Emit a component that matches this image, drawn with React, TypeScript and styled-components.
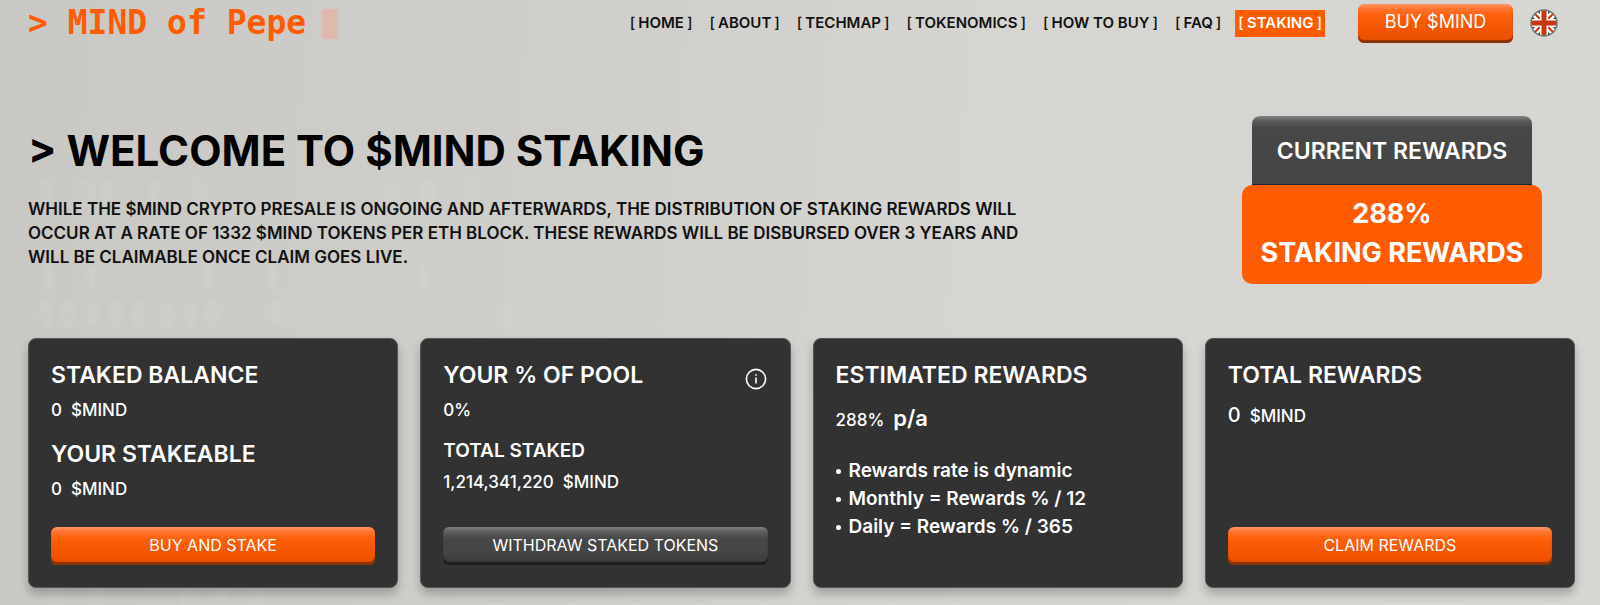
import React from "react";
import styled, { createGlobalStyle, css } from "styled-components";

const GlobalStyle = createGlobalStyle`
  *, *::before, *::after { box-sizing: border-box; }
  html { min-height: 100%; background: #d3d2ce; }
  body {
    margin: 0;
    font-family: Inter, "Liberation Sans", sans-serif;
    color: #111;
  }
  h1, h2, h3, p, ul { margin: 0; padding: 0; }
`;

const Page = styled.div`
  position: relative;
  min-height: 100vh;
  overflow: hidden;
  padding: 0 25px 17px 28px;
  background: linear-gradient(95deg, #c9c8c4 0%, #cfceca 35%, #d6d5d1 62%, #d6d6d2 100%);
`;

const CodeRain = styled.svg`
  position: absolute;
  left: 40px;
  top: 0;
  width: 500px;
  height: 605px;
  filter: blur(2px);
  opacity: 0.3;
`;

const Header = styled.header`
  position: relative;
  display: flex;
  align-items: center;
  height: 46px;
  padding-right: 17px;
`;

const Logo = styled.a`
  display: flex;
  align-items: center;
  gap: 16px;
  margin-right: auto;
  color: #ff5b00;
  font: 700 33px/44px "DejaVu Sans Mono", monospace;
  text-decoration: none;
  white-space: pre;
`;

const Cursor = styled.span`
  width: 16px;
  height: 30px;
  margin-top: 2px;
  background: #dfb9ad;
`;

const Nav = styled.nav`
  display: flex;
  gap: 11px;
  margin-right: 33px;
`;

const NavLink = styled.a<{ $active?: boolean }>`
  display: flex;
  gap: 3px;
  padding: 0 3px 2px;
  font-size: 15px;
  line-height: 25px;
  font-weight: 600;
  white-space: nowrap;
  text-decoration: none;
  color: #111;
  ${(p) => p.$active && css`
    background: #ff5b00;
    color: #fff;
  `}
`;

const Bracket = styled.span`
  font-weight: 500;
`;

const buttonFace = {
  orange: css`
    background: linear-gradient(#ff9465 0, #ff7430 5px, #fd5f09 12px, #f05400 75%, #e84f00 100%);
    box-shadow: inset 0 -3px 1px #8c3207;
  `,
  dark: css`
    background: linear-gradient(#808080 0, #5c5c5c 5px, #474747 12px, #454545 65%, #383838 100%);
    box-shadow: inset 0 -3px 1px #1c1c1c;
  `,
};

const Button = styled.button<{ $tone: "orange" | "dark"; $large?: boolean }>`
  display: block;
  width: ${(p) => (p.$large ? "155px" : "100%")};
  height: ${(p) => (p.$large ? "39px" : "38px")};
  padding: 0 0 3px;
  border: 0;
  border-radius: 6px;
  color: #fff;
  font-family: inherit;
  font-size: ${(p) => (p.$large ? "18px" : "16px")};
  line-height: 24px;
  font-weight: 400;
  white-space: nowrap;
  cursor: pointer;
  ${(p) => buttonFace[p.$tone]}
`;

const Language = styled.button`
  display: flex;
  margin-left: 17px;
  padding: 0;
  border: 0;
  background: none;
  cursor: pointer;
`;

const Hero = styled.section`
  position: relative;
  display: flex;
  align-items: flex-start;
  justify-content: space-between;
  gap: 40px;
  padding: 70px 33px 54px 0;
`;

const Intro = styled.div`
  max-width: 1040px;
  padding-top: 11px;
`;

const Heading = styled.h1`
  font-size: 42px;
  line-height: 48px;
  font-weight: 700;
  color: #000;
`;

const Lead = styled.p`
  margin-top: 22px;
  font-size: 17px;
  line-height: 24px;
  font-weight: 600;
`;

const Line = styled.span`
  display: block;
`;

const Rewards = styled.aside`
  flex: none;
  width: 300px;
  color: #fff;
  text-align: center;
`;

const RewardsTitle = styled.h2`
  margin: 0 10px;
  padding-top: 2px;
  border-radius: 8px 8px 0 0;
  border-bottom: 1px solid #15282c;
  background: linear-gradient(#858585 0, #5c5c5c 5px, #474747 12px, #454545 100%);
  font-size: 23px;
  line-height: 66px;
  font-weight: 600;
`;

const RewardsValue = styled.p`
  height: 99px;
  padding-top: 9px;
  border-radius: 10px;
  background: #ff5b00;
  font-size: 27px;
  line-height: 39px;
  font-weight: 700;
  white-space: nowrap;
`;

const Cards = styled.main`
  position: relative;
  display: grid;
  grid-template-columns: repeat(4, minmax(0, 1fr));
  gap: 22px;
`;

const Card = styled.section`
  display: flex;
  flex-direction: column;
  min-height: 250px;
  padding: 22px 22px 22px;
  border: 1px solid #575555;
  border-radius: 8px;
  background: #323232;
  box-shadow: 0 6px 10px rgba(0, 0, 0, 0.24);
  color: #fff;
`;

const CardHead = styled.div`
  display: flex;
  justify-content: space-between;
`;

const CardTitle = styled.h3<{ $small?: boolean }>`
  font-size: ${(p) => (p.$small ? "19px" : "23px")};
  line-height: 28px;
  font-weight: 600;
  white-space: nowrap;
`;

const Info = styled.button`
  display: flex;
  align-self: flex-end;
  margin: 0 1px -1px 0;
  padding: 0;
  border: 0;
  background: none;
  cursor: pointer;
`;

const Value = styled.p<{ $top: number }>`
  display: flex;
  align-items: baseline;
  gap: 9px;
  margin-top: ${(p) => p.$top}px;
  font-size: 17px;
  line-height: 26px;
  font-weight: 500;
`;

const Group = styled.div<{ $top: number }>`
  margin-top: ${(p) => p.$top}px;
`;

const Unit = styled.span`
  font-size: 22px;
  font-weight: 600;
`;

const Total = styled.span`
  font-size: 20px;
`;

const Actions = styled.div`
  margin-top: auto;
`;

const Notes = styled.ul`
  margin-top: 24px;
  list-style: none;
  font-size: 19px;
  line-height: 28px;
  font-weight: 600;
`;

const Note = styled.li`
  display: flex;
  align-items: center;
  gap: 8px;
  white-space: nowrap;
  &::before {
    content: "";
    width: 5px;
    height: 5px;
    border-radius: 50%;
    background: #fff;
  }
`;

const links = ["HOME", "ABOUT", "TECHMAP", "TOKENOMICS", "HOW TO BUY", "FAQ", "STAKING"];

const rain = [
  [0, 178, 13], [38, 178, 18], [60, 178, 12], [110, 178, 8], [152, 178, 14], [345, 178, 14], [380, 178, 16], [425, 178, 12],
  [0, 300, 12], [22, 300, 14], [48, 300, 10], [70, 300, 12], [92, 300, 12], [120, 300, 14], [145, 300, 10], [166, 300, 12], [232, 298, 8], [464, 302, 7],
  [5, 264, 8], [48, 264, 6], [165, 262, 6], [230, 262, 6], [380, 264, 5],
  [10, 586, 12], [50, 586, 14], [140, 586, 14], [176, 586, 12], [210, 586, 12],
];

const UkFlag = () => (
  <svg width="28" height="28" viewBox="0 0 28 28" aria-hidden="true">
    <clipPath id="flag"><circle cx="14" cy="14" r="13" /></clipPath>
    <g clipPath="url(#flag)">
      <rect width="28" height="28" fill="#163b4b" />
      <path d="M0 0l28 28M28 0L0 28" stroke="#fff" strokeWidth="7" />
      <path d="M0 0l28 28M28 0L0 28" stroke="#c63a0e" strokeWidth="2" />
      <path d="M14 0v28M0 14h28" stroke="#fff" strokeWidth="8" />
      <path d="M14 0v28M0 14h28" stroke="#c63a0e" strokeWidth="5" />
    </g>
    <circle cx="14" cy="14" r="13" fill="none" stroke="#777977" strokeWidth="1.5" />
  </svg>
);

const InfoIcon = () => (
  <svg width="22" height="22" viewBox="0 0 22 22" fill="none" stroke="#fff" aria-hidden="true">
    <circle cx="11" cy="11" r="9.6" strokeWidth="1.6" />
    <path d="M11 9.5v6M11 6.2v1.6" strokeWidth="1.6" />
  </svg>
);

export default function App() {
  return (
    <>
      <GlobalStyle />
      <Page>
        <CodeRain viewBox="0 0 500 605" aria-hidden="true">
          {rain.map(([x, y, w]) => (
            <ellipse key={`${x}-${y}`} cx={x + w / 2} cy={y + 14} rx={w / 3} ry="11" fill="none" stroke="#dcdeda" strokeWidth="3" />
          ))}
        </CodeRain>
        <Header>
          <Logo href="#">{"> MIND of Pepe"}<Cursor /></Logo>
          <Nav>
            {links.map((label) => (
              <NavLink key={label} href="#" $active={label === "STAKING"}>
                <Bracket>[</Bracket><span>{label}</span><Bracket>]</Bracket>
              </NavLink>
            ))}
          </Nav>
          <Button $tone="orange" $large>BUY $MIND</Button>
          <Language aria-label="English"><UkFlag /></Language>
        </Header>

        <Hero>
          <Intro>
            <Heading>&gt; WELCOME TO $MIND STAKING</Heading>
            <Lead>
              <Line>WHILE THE $MIND CRYPTO PRESALE IS ONGOING AND AFTERWARDS, THE DISTRIBUTION OF STAKING REWARDS WILL</Line>
              <Line>OCCUR AT A RATE OF 1332 $MIND TOKENS PER ETH BLOCK. THESE REWARDS WILL BE DISBURSED OVER 3 YEARS AND</Line>
              <Line>WILL BE CLAIMABLE ONCE CLAIM GOES LIVE.</Line>
            </Lead>
          </Intro>
          <Rewards>
            <RewardsTitle>CURRENT REWARDS</RewardsTitle>
            <RewardsValue>288%<br />STAKING REWARDS</RewardsValue>
          </Rewards>
        </Hero>

        <Cards>
          <Card>
            <CardTitle>STAKED BALANCE</CardTitle>
            <Value $top={8}><span>0</span><span>$MIND</span></Value>
            <Group $top={17}>
              <CardTitle>YOUR STAKEABLE</CardTitle>
              <Value $top={8}><span>0</span><span>$MIND</span></Value>
            </Group>
            <Actions><Button $tone="orange">BUY AND STAKE</Button></Actions>
          </Card>
          <Card>
            <CardHead>
              <CardTitle>YOUR % OF POOL</CardTitle>
              <Info aria-label="About your share of the pool"><InfoIcon /></Info>
            </CardHead>
            <Value $top={8}>0%</Value>
            <Group $top={14}>
              <CardTitle $small>TOTAL STAKED</CardTitle>
              <Value $top={4}><span>1,214,341,220</span><span>$MIND</span></Value>
            </Group>
            <Actions><Button $tone="dark">WITHDRAW STAKED TOKENS</Button></Actions>
          </Card>
          <Card>
            <CardTitle>ESTIMATED REWARDS</CardTitle>
            <Value $top={16}><span>288%</span><Unit>p/a</Unit></Value>
            <Notes>
              <Note>Rewards rate is dynamic</Note>
              <Note>Monthly = Rewards % / 12</Note>
              <Note>Daily = Rewards % / 365</Note>
            </Notes>
          </Card>
          <Card>
            <CardTitle>TOTAL REWARDS</CardTitle>
            <Value $top={13}><Total>0</Total><span>$MIND</span></Value>
            <Actions><Button $tone="orange">CLAIM REWARDS</Button></Actions>
          </Card>
        </Cards>
      </Page>
    </>
  );
}
